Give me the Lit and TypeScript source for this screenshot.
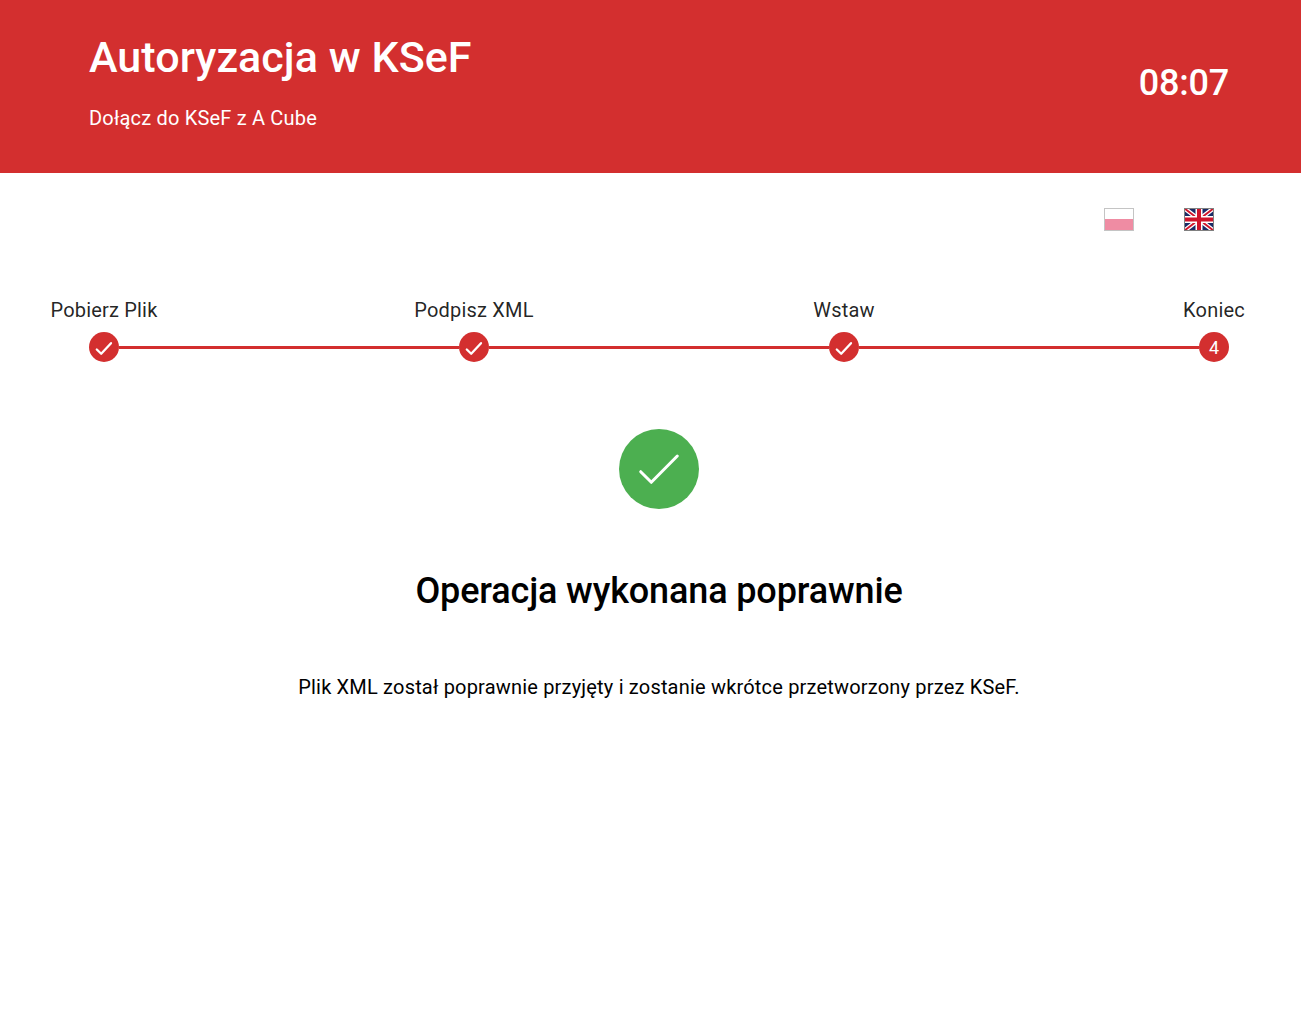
import { LitElement, html, css } from "lit";
import { customElement } from "lit/decorators.js";

const check = html`<svg class="chk" viewBox="0 0 30 30" width="30" height="30"><path d="M7.800 17.500L12.200 21.800L22 11.200" fill="none" stroke="#fff" stroke-width="2.300" stroke-linecap="round" stroke-linejoin="round"/></svg>`;

@customElement("app-root")
export class AppRoot extends LitElement {
  static styles = css`
    :host { display: block; font-family: Roboto, "Liberation Sans", sans-serif; color: #000; background: #fff; min-height: 1022px; }
    .hdr { height: 173px; box-sizing: border-box; background: #d32f2f; color: #fff; padding: 0 72px 0 89px; display: flex; justify-content: space-between; align-items: center; }
    .hdr h1 { margin: 0; font-size: 43px; font-weight: 500; line-height: 56px; letter-spacing: .06px; }
    .hdr p { margin: 21px 0 0; font-size: 20px; line-height: 24px; font-weight: 400; letter-spacing: .00938em; }
    .titles { margin-top: -15px; }
    .time { font-size: 36px; font-weight: 500; line-height: 42px; margin-top: -8px; letter-spacing: -.2px; }
    .langs { display: flex; justify-content: flex-end; gap: 50px; padding: 35px 87px 0 0; height: 25px; }
    .flag { width: 30px; height: 23px; display: block; }
    .stepper { margin: 65px 72px 0 89px; }
    .labels, .track { display: flex; justify-content: space-between; }
    .lab { width: 30px; display: flex; justify-content: center; white-space: nowrap; font-size: 20px; line-height: 24px; color: rgba(0,0,0,.87); letter-spacing: .00938em; }
    .labels { height: 24px; }
    .track { margin-top: 10px; align-items: center; }
    .dot { width: 30px; height: 30px; border-radius: 50%; background: #d32f2f; color: #fff; flex: none; display: flex; align-items: center; justify-content: center; font-size: 18px; font-weight: 400; }
    .chk { display: block; }
    .line { flex: 1; height: 3px; background: #d32f2f; }
    .result { margin: 67px 72px 0 89px; display: flex; flex-direction: column; align-items: center; }
    .ok { width: 80px; height: 80px; border-radius: 50%; background: #4caf50; display: block; }
    .result h2 { margin: 60px 0 0; font-size: 36px; line-height: 44px; font-weight: 500; letter-spacing: -.14px; }
    .result p { margin: 62px 0 0; font-size: 20px; line-height: 24px; letter-spacing: .00938em; }
  `;

  render() {
    return html`
      <header class="hdr">
        <div class="titles">
          <h1>Autoryzacja w KSeF</h1>
          <p>Dołącz do KSeF z A Cube</p>
        </div>
        <div class="time">08:07</div>
      </header>
      <div class="langs">
        <svg class="flag" viewBox="0 0 30 23">
          <rect width="30" height="11" fill="#fff"/>
          <rect y="11" width="30" height="12" fill="#ef8ca3"/>
          <rect x=".5" y=".5" width="29" height="22" fill="none" stroke="#c4c4c4"/>
        </svg>
        <svg class="flag" viewBox="0 0 30 23">
          <rect width="30" height="23" fill="#1a2a66"/>
          <path d="M0 0L30 23M30 0L0 23" stroke="#fff" stroke-width="4.500"/>
          <path d="M0 0L30 23M30 0L0 23" stroke="#cf142b" stroke-width="1.800"/>
          <path d="M15 0V23M0 11.500H30" stroke="#fff" stroke-width="7"/>
          <path d="M15 0V23M0 11.500H30" stroke="#cf142b" stroke-width="4"/>
          <rect x=".5" y=".5" width="29" height="22" fill="none" stroke="#808080"/>
        </svg>
      </div>
      <div class="stepper">
        <div class="labels">
          <div class="lab">Pobierz Plik</div>
          <div class="lab">Podpisz XML</div>
          <div class="lab">Wstaw</div>
          <div class="lab">Koniec</div>
        </div>
        <div class="track">
          <div class="dot">${check}</div><div class="line"></div>
          <div class="dot">${check}</div><div class="line"></div>
          <div class="dot">${check}</div><div class="line"></div>
          <div class="dot">4</div>
        </div>
      </div>
      <div class="result">
        <svg class="ok" viewBox="0 0 80 80"><path d="M21.700 42.700L32.300 53.300L58.300 27" fill="none" stroke="#fff" stroke-width="3" stroke-linecap="round" stroke-linejoin="round"/></svg>
        <h2>Operacja wykonana poprawnie</h2>
        <p>Plik XML został poprawnie przyjęty i zostanie wkrótce przetworzony przez KSeF.</p>
      </div>
    `;
  }
}
